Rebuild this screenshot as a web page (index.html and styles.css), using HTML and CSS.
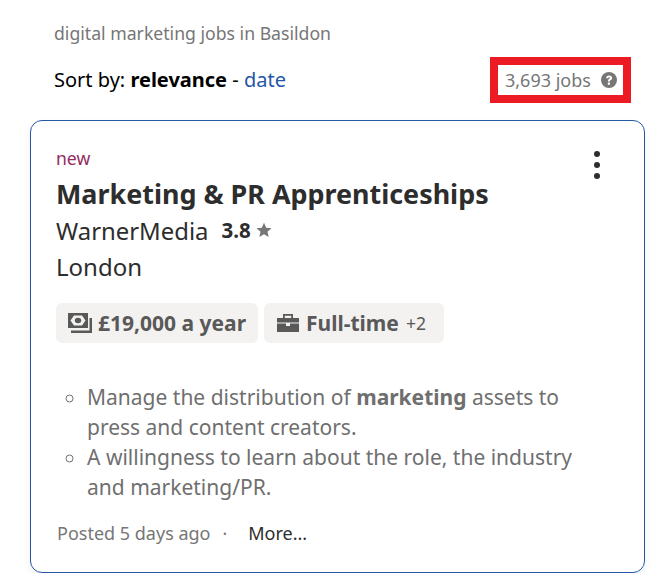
FILE: index.html
```html
<!DOCTYPE html>
<html lang="en">
<head>
  <meta charset="UTF-8">
  <title>digital marketing jobs in Basildon</title>
  <link rel="stylesheet" href="styles.css">
</head>
<body>
  <div class="page">
    <h1 class="search-title">digital marketing jobs in Basildon</h1>

    <div class="sort-row">
      <div class="sort-by">Sort by: <b>relevance</b> - <a href="#">date</a></div>
      <div class="job-count">
        <span>3,693 jobs</span>
        <svg class="help-icon" viewBox="0 0 16 16" width="16" height="16">
          <circle cx="8" cy="8" r="8" fill="#767676"/>
          <path d="M5 6.200C5.100 4.500 6.300 3.400 8.100 3.400c1.800 0 3 1 3 2.500 0 1-.5 1.600-1.300 2.100-.7.400-.9.700-.9 1.300v.3H6.900V9.200c0-1 .3-1.600 1.100-2.100.7-.4.900-.7.900-1.100 0-.5-.3-.8-.8-.8-.6 0-1 .4-1.100 1H5z" fill="#fff"/>
          <rect x="6.800" y="10.600" width="2.200" height="2.200" rx=".5" fill="#fff"/>
        </svg>
      </div>
    </div>

    <div class="job-card">
      <div class="menu-dots"><i></i><i></i><i></i></div>
      <div class="new-label">new</div>
      <h2 class="job-title">Marketing &amp; PR Apprenticeships</h2>
      <div class="company-row">
        <span class="company">WarnerMedia</span>
        <span class="rating">3.8</span>
        <svg class="star" viewBox="0 0 16 16" width="16" height="16">
          <path d="M8 .8l2.200 4.900 5.300.5-4 3.500 1.200 5.200L8 12.200l-4.700 2.700 1.200-5.200-4-3.500 5.300-.5z" fill="#767676"/>
        </svg>
      </div>
      <div class="location">London</div>

      <div class="tags">
        <div class="tag">
          <svg class="tag-icon" viewBox="0 0 24 20" width="24" height="20">
            <path fill-rule="evenodd" d="M0 0h20v15H0zM2.500 7.500L6 2.500h8l3.500 5-3.500 5H6z" fill="#595959"/>
            <ellipse cx="10" cy="7.500" rx="3.200" ry="2.800" fill="#595959"/>
            <path d="M21.500 5H24v15H3v-2.500h18.500z" fill="#595959"/>
          </svg>
          <b>£19,000 a year</b>
        </div>
        <div class="tag tag-type">
          <svg class="tag-icon" viewBox="0 0 22 18" width="22" height="18">
            <path fill-rule="evenodd" d="M6 0h10v4h6v4.500H0V4h6zM7.800 1.800V4h6.400V1.800z" fill="#595959"/>
            <path d="M0 9.500h9V12h4V9.500h9V18H0z" fill="#595959"/>
          </svg>
          <b>Full-time</b>
          <span class="tag-more">+2</span>
        </div>
      </div>

      <ul class="snippet">
        <li>Manage the distribution of <b>marketing</b> assets to press and content creators.</li>
        <li>A willingness to learn about the role, the industry and marketing/PR.</li>
      </ul>

      <div class="card-footer">
        <span class="posted">Posted 5 days ago</span>
        <span class="dot">·</span>
        <a class="more" href="#">More...</a>
      </div>
    </div>
  </div>
</body>
</html>
```

FILE: styles.css
```css
* {
  box-sizing: border-box;
}

body {
  margin: 0;
  font-family: "Noto Sans", sans-serif;
  background: #fff;
  color: #2d2d2d;
}

.page {
  padding: 22px 27px 0 30px;
}

.search-title {
  margin: 0 0 0 24px;
  font-size: 17.650px;
  font-weight: 400;
  line-height: 22px;
  color: #767676;
}

.sort-row {
  display: flex;
  justify-content: space-between;
  align-items: center;
  margin: 13px 14px 17px 24px;
  height: 46px;
}

.sort-by {
  padding-bottom: 2px;
  font-size: 20px;
  color: #000;
}

.sort-by a {
  color: #2557a7;
  text-decoration: none;
}

.job-count {
  display: flex;
  align-items: center;
  gap: 10px;
  width: 141px;
  height: 46px;
  padding-left: 7px;
  border: 8px solid #ed1c24;
  font-size: 18px;
  color: #767676;
}

.job-card {
  position: relative;
  height: 453px;
  padding: 25px 25px 0;
  border: 1px solid #2557a7;
  border-radius: 12px;
  box-shadow: 0 4px 8px rgba(0, 0, 0, 0.06);
}

.menu-dots {
  position: absolute;
  top: 30px;
  right: 44px;
  display: flex;
  flex-direction: column;
  gap: 5px;
}

.menu-dots i {
  width: 6px;
  height: 6px;
  border-radius: 50%;
  background: #2d2d2d;
}

.new-label {
  font-size: 17.600px;
  line-height: 24px;
  color: #942b5f;
}

.job-title {
  margin: 0;
  padding-top: 4px;
  font-size: 26.900px;
  font-weight: 700;
  line-height: 39px;
}

.company-row {
  display: flex;
  align-items: center;
  height: 34px;
  font-size: 23.900px;
}

.rating {
  margin-left: 13px;
  font-size: 20.500px;
  font-weight: 700;
}

.star {
  margin-left: 5px;
}

.location {
  font-size: 24px;
  line-height: 40px;
}

.tags {
  display: flex;
  gap: 6px;
  margin-top: 16px;
}

.tag {
  display: flex;
  align-items: center;
  height: 40px;
  padding: 0 12px;
  border-radius: 6px;
  background: #f3f2f1;
  font-size: 21px;
  color: #595959;
}

.tag-icon {
  margin-right: 6px;
}

.tag-type {
  padding: 0 18px 0 13px;
}

.tag-type .tag-icon {
  margin-right: 7px;
}

.tag-more {
  margin-left: 7px;
  font-size: 17.600px;
}

.snippet {
  margin: 39px 0 0;
  padding: 0 40px 0 31px;
  font-size: 21px;
  line-height: 30px;
  color: #6f6f6f;
  list-style: circle;
}

.card-footer {
  display: flex;
  align-items: center;
  margin-top: 16px;
  margin-left: 1px;
  height: 30px;
}

.posted {
  font-size: 18px;
  color: #767676;
}

.dot {
  margin: 0 21px 0 12px;
  font-size: 17.600px;
  color: #767676;
}

.more {
  font-size: 18px;
  color: #2d2d2d;
  text-decoration: none;
}
```
